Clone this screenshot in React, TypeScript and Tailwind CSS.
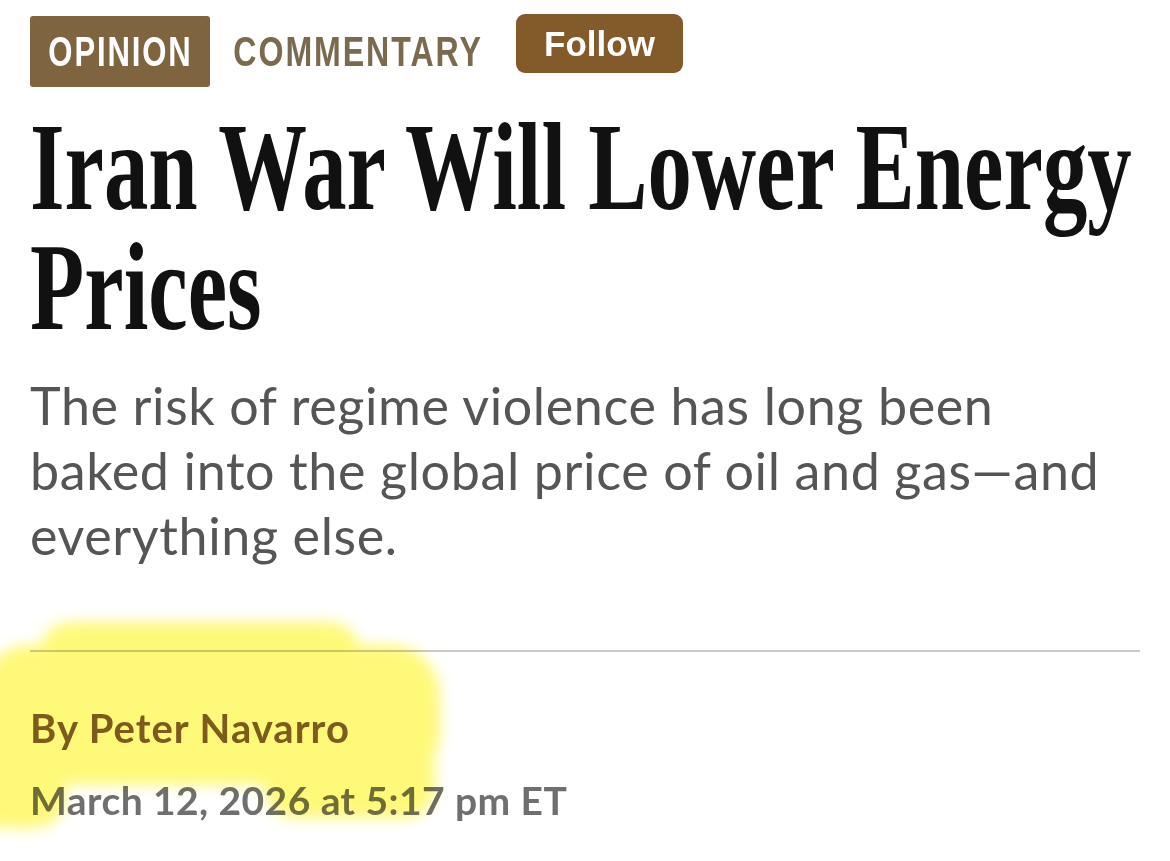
import React from "react";

// ---------------- article header (opinion) ----------------
const serif = "font-['Liberation_Serif','Times_New_Roman',serif]";
const sans = "font-['Lato','Noto_Sans',sans-serif]";
const arial = "font-['Liberation_Sans',Arial,sans-serif]";

function Highlight() {
    // marker highlight painted over the byline
    return (
        <div className="pointer-events-none absolute inset-0 mix-blend-multiply blur-[7px]">
            <div className="absolute left-[-20px] top-[645px] h-[140px] w-[460px] rounded-[50px] bg-[#fff97a]" />
            <div className="absolute left-[40px] top-[622px] h-[62px] w-[320px] rounded-full bg-[#fff97a]" />
            <div className="absolute left-[265px] top-[740px] h-[78px] w-[170px] rounded-[30px] bg-[#fff97a]" />
            <div className="absolute left-[-30px] top-[740px] h-[88px] w-[95px] rounded-[30px] bg-[#fff97a]" />
        </div>
    );
}

export default function App() {
    return (
        <div className="relative min-h-screen overflow-hidden bg-white">
            <div className="px-[30px] pt-[14px]">
                {/* tags row */}
                <div className="flex items-start">
                    <span className="mt-[2px] flex h-[71px] w-[180px] items-center justify-center rounded-[3px] bg-[#7f6440]">
                        <span className={`${arial} inline-block scale-x-[0.74] whitespace-nowrap text-[42px] font-bold leading-none tracking-[0.06em] text-white`}>
                            OPINION
                        </span>
                    </span>
                    <span className="ml-[23px] mt-[2px] flex h-[71px] w-[250px] items-center justify-center">
                        <span className={`${arial} inline-block scale-x-[0.765] whitespace-nowrap text-[42px] font-bold leading-none tracking-[0.06em] text-[#7b6a4f]`}>
                            COMMENTARY
                        </span>
                    </span>
                    <button className={`${arial} ml-[33px] flex h-[59px] w-[167px] items-center justify-center rounded-[9px] bg-[#835a29] text-[35px] font-bold leading-none text-white`}>
                        Follow
                    </button>
                </div>

                {/* headline */}
                <h1 className={`${serif} mt-[21px] text-[124px] font-bold leading-[120px] text-[#111111]`}>
                    <div className="origin-left scale-x-[0.716] whitespace-nowrap">Iran War Will Lower Energy</div>
                    <div className="origin-left scale-x-[0.716] whitespace-nowrap">Prices</div>
                </h1>

                {/* dek */}
                <p className={`${sans} mt-[25px] text-[52px] leading-[65px] tracking-[0.012em] text-[#555555]`}>
                    The risk of regime violence has long been
                    <br />
                    baked into the global price of oil and gas—and
                    <br />
                    everything else.
                </p>

                <div className="mt-[82px] h-[2px] bg-[#cbcbcb]" />

                {/* byline */}
                <div className={`${sans} mt-[52px] text-[40px] font-bold leading-[48px] tracking-[0.025em] text-[#7c5d3a]`}>
                    By Peter Navarro
                </div>
                <div className={`${sans} mt-[24px] text-[39px] font-bold leading-[48px] tracking-[0.011em] text-[#6f6f6f]`}>
                    March 12, 2026 at 5:17 pm ET
                </div>
            </div>

            <Highlight />
        </div>
    );
}
